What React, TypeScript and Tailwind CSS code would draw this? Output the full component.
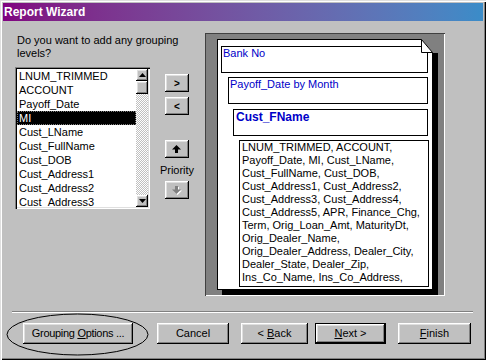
import React from "react";

const FIELDS = [
  "LNUM_TRIMMED", "ACCOUNT", "Payoff_Date", "MI", "Cust_LName",
  "Cust_FullName", "Cust_DOB", "Cust_Address1", "Cust_Address2", "Cust_Address3",
];

const DETAIL_LINES = [
  "LNUM_TRIMMED, ACCOUNT,",
  "Payoff_Date, MI, Cust_LName,",
  "Cust_FullName, Cust_DOB,",
  "Cust_Address1, Cust_Address2,",
  "Cust_Address3, Cust_Address4,",
  "Cust_Address5, APR, Finance_Chg,",
  "Term, Orig_Loan_Amt, MaturityDt,",
  "Orig_Dealer_Name,",
  "Orig_Dealer_Address, Dealer_City,",
  "Dealer_State, Dealer_Zip,",
  "Ins_Co_Name, Ins_Co_Address,",
];

// classic win9x raised bevel
const raised =
  "bg-[#c0c0c0] shadow-[inset_-1px_-1px_#000,inset_1px_1px_#fff,inset_-2px_-2px_#808080,inset_2px_2px_#dfdfdf]";

function Arrow({ up, disabled }: { up: boolean; disabled?: boolean }) {
  const pts = up ? "4.5,0 9,4.5 6,4.5 6,8 3,8 3,4.5 0,4.5" : "3,0 6,0 6,3.5 9,3.5 4.5,8 0,3.5 3,3.5";
  return (
    <svg width="10" height="9" viewBox="0 0 10 9">
      {disabled && <polygon points={pts} fill="#fff" transform="translate(1,1)" />}
      <polygon points={pts} fill={disabled ? "#808080" : "#000"} />
    </svg>
  );
}

function ScrollTri({ up }: { up: boolean }) {
  return (
    <svg width="7" height="4" viewBox="0 0 7 4">
      <polygon points={up ? "3.5,0 7,4 0,4" : "0,0 7,0 3.5,4"} fill="#000" />
    </svg>
  );
}

export default function App() {
  return (
    <div className="relative w-[486px] h-[360px] p-[3px] flex flex-col overflow-hidden bg-[#c0c0c0] text-[11px] text-black font-['Liberation_Sans',Arial,sans-serif] shadow-[inset_1px_1px_#dfdfdf,inset_2px_2px_#fff,inset_-1px_-1px_#000,inset_-2px_-2px_#808080]">
      {/* title bar */}
      <div className="h-[18px] flex items-center pl-[1px] bg-linear-to-r from-[#800080] to-[#3a8cc8] text-white font-bold text-[12px]">
        Report Wizard
      </div>

      <div className="flex pt-[12px] pl-[12px]">
        {/* left side */}
        <div className="w-[175px] flex flex-col">
          <p className="pl-[2px] mt-[1px] leading-[13px]">
            Do you want to add any grouping
            <br />
            levels?
          </p>
          <div className="flex mt-[7px]">
            {/* field list */}
            <div className="w-[135px] h-[142px] p-[2px] flex bg-white shadow-[inset_1px_1px_#808080,inset_2px_2px_#000,inset_-1px_-1px_#fff,inset_-2px_-2px_#dfdfdf]">
              <div className="flex-1 flex flex-col overflow-hidden">
                {FIELDS.map((f) => (
                  <div
                    key={f}
                    className={
                      f === "MI"
                        ? "h-[14px] leading-[12px] pl-[1px] bg-black text-white border border-dotted border-[#808080] whitespace-nowrap"
                        : "h-[14px] leading-[14px] pl-[2px] whitespace-nowrap"
                    }
                  >
                    {f}
                  </div>
                ))}
              </div>
              <div className="w-[12px] flex flex-col">
                <div className={`h-[12px] flex items-center justify-center ${raised}`}>
                  <ScrollTri up />
                </div>
                <div className={`h-[13px] ${raised}`} />
                <div className="flex-1 bg-[image:repeating-conic-gradient(#c0c0c0_0_25%,#fff_0_50%)] bg-[length:2px_2px]" />
                <div className={`h-[12px] flex items-center justify-center ${raised}`}>
                  <ScrollTri up={false} />
                </div>
              </div>
            </div>

            {/* add / remove / priority */}
            <div className="ml-[15px] w-[24px] flex flex-col items-center">
              <div className={`mt-[7px] w-[24px] h-[18px] flex items-center justify-center font-bold text-[10px] ${raised}`}>
                &gt;
              </div>
              <div className={`mt-[5px] w-[24px] h-[18px] flex items-center justify-center font-bold text-[10px] ${raised}`}>
                &lt;
              </div>
              <div className={`mt-[25px] w-[24px] h-[18px] flex items-center justify-center ${raised}`}>
                <Arrow up />
              </div>
              <div className="mt-[5px] leading-[14px] whitespace-nowrap">Priority</div>
              <div className={`mt-[4px] w-[24px] h-[18px] flex items-center justify-center ${raised}`}>
                <Arrow up={false} disabled />
              </div>
            </div>
          </div>
        </div>

        {/* preview */}
        <div className="ml-[15px] w-[240px] h-[263px] pt-[6px] pl-[12px] bg-[#808080] shadow-[inset_1px_1px_#404040,inset_-1px_-1px_#fff]">
          <div className="relative w-[216px] h-[251px] flex flex-col items-start bg-white border border-black shadow-[5px_5px_0_#000]">
            <div className="ml-[3px] mt-[6px] w-[207px] h-[27px] pl-[1px] leading-[13px] border border-black text-[#0000c8]">
              Bank No
            </div>
            <div className="ml-[10px] mt-[4px] w-[200px] h-[27px] pl-[1px] leading-[13px] border border-black text-[#0000c8]">
              Payoff_Date by Month
            </div>
            <div className="ml-[15px] mt-[5px] w-[195px] h-[27px] pl-[2px] leading-[14px] border border-black text-[#0000c8] font-bold text-[12px]">
              Cust_FName
            </div>
            <div className="ml-[21px] mt-[4px] w-[190px] h-[147px] pl-[2px] leading-[13px] border border-black">
              {DETAIL_LINES.map((l) => (
                <div key={l} className="whitespace-nowrap">{l}</div>
              ))}
            </div>
            {/* folded corner */}
            <svg className="absolute top-[-1px] left-[203px]" width="17" height="14" viewBox="0 0 17 14">
              <polygon points="0,0 17,0 17,14 12,14" fill="#808080" />
              <polygon points="0.5,0.5 0.5,13.5 11.5,13.5" fill="#fff" stroke="#000" />
            </svg>
          </div>
        </div>
      </div>

      {/* etched separator */}
      <div className="ml-[9px] mt-[15px] w-[461px] h-[2px] border-t border-t-[#808080] border-b border-b-white" />

      {/* buttons */}
      <div className="flex mt-[10px] h-[21px]">
        <div className={`ml-[20px] w-[110px] flex items-center justify-center tracking-[-0.3px] ${raised}`}>
          Grouping&nbsp;<span className="underline underline-offset-1">O</span>ptions ...
        </div>
        <div className={`ml-[24px] w-[72px] flex items-center justify-center ${raised}`}>Cancel</div>
        <div className={`ml-[12px] w-[67px] flex items-center justify-center ${raised}`}>
          &lt; <span className="ml-[3px] underline underline-offset-1">B</span>ack
        </div>
        <div className="ml-[7px] w-[71px] border border-black flex">
          <div className={`flex-1 flex items-center justify-center ${raised}`}>
            <span className="underline underline-offset-1">N</span>ext &gt;
          </div>
        </div>
        <div className={`ml-[12px] w-[73px] flex items-center justify-center ${raised}`}>
          <span className="underline underline-offset-1">F</span>inish
        </div>
      </div>

      {/* hand drawn annotation */}
      <svg className="absolute left-[6px] top-[313px]" width="143" height="43" viewBox="0 0 143 43">
        <ellipse cx="71.5" cy="21.5" rx="70.5" ry="20.5" fill="none" stroke="#000" strokeWidth="1" />
      </svg>
    </div>
  );
}
